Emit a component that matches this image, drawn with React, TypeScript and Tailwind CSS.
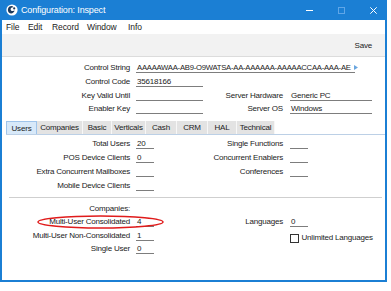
import React from "react";

const tabs = [
  { name: "Users", w: "w-[31px]" },
  { name: "Companies", w: "w-[46px]" },
  { name: "Basic", w: "w-[29px]" },
  { name: "Verticals", w: "w-[34px]" },
  { name: "Cash", w: "w-[31px]" },
  { name: "CRM", w: "w-[31px]" },
  { name: "HAL", w: "w-[29px]" },
  { name: "Technical", w: "w-[38px]" },
];

function Field({ className = "", children }: { className?: string; children?: React.ReactNode }) {
  return (
    <div
      className={
        "h-[10px] overflow-hidden whitespace-nowrap border-b border-[#7d7d7d] pl-[1px] leading-[9px] " +
        className
      }
    >
      {children}
    </div>
  );
}

function Label({ className = "", children }: { className?: string; children?: React.ReactNode }) {
  return <span className={"whitespace-nowrap text-right " + className}>{children}</span>;
}

export default function App() {
  return (
    <div className="h-[291px] w-[391px] bg-white font-['Liberation_Sans',Arial,sans-serif] text-[8px] leading-none tracking-[-0.2px] text-[#1b1b1b]">
      <div className="relative flex h-[282px] w-[387px] flex-col border-x-2 border-b-2 border-[#1b7fd4] bg-white">
        {/* title bar */}
        <div className="flex h-[20px] shrink-0 items-center bg-[#1b7fd4] text-white">
          <svg className="ml-[4px] h-[12px] w-[12px]" viewBox="0 0 12 12">
            <circle cx="6" cy="6" r="5.6" fill="#ffffff" />
            <path d="M2.2 4.2 C3.2 1.8 6.4 1.4 7.6 3.2 C6.2 2.9 4.6 3.6 4.6 5.2 C4.6 7 6.8 7.6 8.6 6.6 C8 9.4 4.6 10.4 2.8 8.4 C1.8 7.2 1.7 5.6 2.2 4.2 Z" fill="#1d3a5c" />
            <circle cx="8.2" cy="4.4" r="1.1" fill="#1d3a5c" />
          </svg>
          <span className="ml-[3px] text-[9px] tracking-[-0.15px]">Configuration: Inspect</span>
          <div className="ml-auto mr-[8px] flex items-center gap-[25px]">
            <div className="h-px w-[7px] bg-white" />
            <div className="h-[7px] w-[7px] border border-[#5fa6e8]" />
            <svg className="h-[7px] w-[7px]" viewBox="0 0 7 7">
              <path d="M0.3 0.3 L6.7 6.7 M6.7 0.3 L0.3 6.7" stroke="#ffffff" strokeWidth="1" />
            </svg>
          </div>
        </div>

        {/* menu bar */}
        <div className="flex h-[14px] shrink-0 items-center pl-[4px] pt-[1px] text-[8.5px] tracking-[-0.1px]">
          <span className="w-[22px]">File</span>
          <span className="w-[24px]">Edit</span>
          <span className="w-[35px]">Record</span>
          <span className="w-[41px]">Window</span>
          <span>Info</span>
        </div>

        {/* toolbar */}
        <div className="flex h-[23px] shrink-0 items-center justify-end border-b border-[#dcdcdc] bg-[#f2f2f2] pr-[13px] pt-[1px]">
          <span>Save</span>
        </div>

        {/* header fields */}
        <div className="flex flex-col pt-[4.5px]">
          <div className="flex h-[13.67px] items-center">
            <Label className="w-[128px]">Control String</Label>
            <Field className="ml-[6px] w-[219px] text-[7.7px] tracking-[-0.25px]">
              AAAAAWAA-AB9-O9WATSA-AA-AAAAAA-AAAAACCAA-AAA-AE
            </Field>
            <svg className="ml-[-1px] mb-[2px] h-[5px] w-[4px]" viewBox="0 0 4 5">
              <path d="M0 0 L4 2.5 L0 5 Z" fill="#6aa6df" />
            </svg>
          </div>
          <div className="flex h-[13.67px] items-center">
            <Label className="w-[128px]">Control Code</Label>
            <Field className="ml-[6px] w-[67px]">35618166</Field>
          </div>
          <div className="flex h-[13.67px] items-center">
            <Label className="w-[128px]">Key Valid Until</Label>
            <Field className="ml-[6px] w-[67px]" />
            <Label className="w-[80px]">Server Hardware</Label>
            <Field className="ml-[7px] w-[82px]">Generic PC</Field>
          </div>
          <div className="flex h-[13.67px] items-center">
            <Label className="w-[128px]">Enabler Key</Label>
            <Field className="ml-[6px] w-[67px]" />
            <Label className="w-[80px]">Server OS</Label>
            <Field className="ml-[7px] w-[82px]">Windows</Field>
          </div>
        </div>

        {/* tabs */}
        <div className="ml-[4px] mt-[4.8px] flex border-b border-[#bcd0e6]">
          {tabs.map((t, i) => (
            <div
              key={t.name}
              className={
                "h-[13px] text-center leading-[13px] " +
                t.w +
                (i === 0
                  ? " border border-b-0 border-[#9fc4ea] bg-[#d8e9f9] leading-[12px]"
                  : " border-r border-[#f7f7f7] bg-[#e3e3e3]")
              }
            >
              {t.name}
            </div>
          ))}
        </div>

        {/* users panel */}
        <div className="flex flex-col pt-[2.3px]">
          <div className="flex h-[14px] items-center">
            <Label className="w-[128px]">Total Users</Label>
            <Field className="ml-[6px] w-[18px]">20</Field>
            <Label className="w-[129px]">Single Functions</Label>
            <Field className="ml-[7px] w-[18px]" />
          </div>
          <div className="flex h-[14px] items-center">
            <Label className="w-[128px]">POS Device Clients</Label>
            <Field className="ml-[6px] w-[18px]">0</Field>
            <Label className="w-[129px]">Concurrent Enablers</Label>
            <Field className="ml-[7px] w-[18px]" />
          </div>
          <div className="flex h-[14px] items-center">
            <Label className="w-[128px]">Extra Concurrent Mailboxes</Label>
            <Field className="ml-[6px] w-[18px]" />
            <Label className="w-[129px]">Conferences</Label>
            <Field className="ml-[7px] w-[18px]" />
          </div>
          <div className="flex h-[14px] items-center">
            <Label className="w-[128px]">Mobile Device Clients</Label>
            <Field className="ml-[6px] w-[18px]" />
          </div>
        </div>

        <div className="ml-[7px] mr-[3px] mt-[4px] h-px bg-[#cfcfcf]" />

        {/* companies */}
        <div className="flex flex-col pt-[4px]">
          <div className="flex h-[13.5px] items-center">
            <Label className="w-[128px]">Companies:</Label>
          </div>
          <div className="flex h-[13.5px] items-center">
            <Label className="w-[128px]">Multi-User Consolidated</Label>
            <Field className="ml-[6px] w-[18px]">4</Field>
            <Label className="w-[129px]">Languages</Label>
            <Field className="ml-[7px] w-[18px]">0</Field>
          </div>
          <div className="flex h-[13.5px] items-center">
            <Label className="w-[128px]">Multi-User Non-Consolidated</Label>
            <Field className="ml-[6px] w-[18px]">1</Field>
            <div className="ml-[135.5px] mt-[5px] flex items-center">
              <div className="h-[9px] w-[9px] border border-[#333333] bg-white" />
              <span className="ml-[3px]">Unlimited Languages</span>
            </div>
          </div>
          <div className="flex h-[13.5px] items-center">
            <Label className="w-[128px]">Single User</Label>
            <Field className="ml-[6px] w-[18px]">0</Field>
          </div>
        </div>

        {/* annotation */}
        <svg className="absolute left-[35px] top-[215px] h-[14px] w-[127px]" viewBox="0 0 127 14">
          <ellipse cx="63.5" cy="7" rx="62.5" ry="6" fill="none" stroke="#e01b1b" strokeWidth="1.5" />
        </svg>
      </div>
    </div>
  );
}
